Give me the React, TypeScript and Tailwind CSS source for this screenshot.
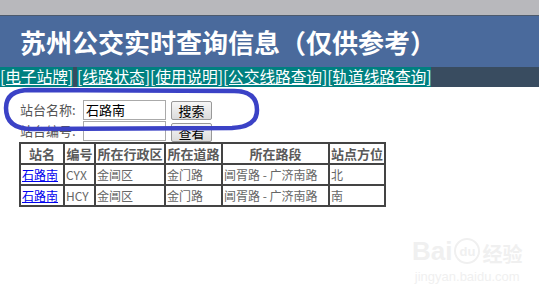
export default function App() {
  const nav = ["[电子站牌]", " ", "[线路状态]", "[使用说明]", "[公交线路查询]", "[轨道线路查询]"];
  const rows = [
    ["石路南", "CYX", "金阊区", "金门路", "阊胥路 - 广济南路", "北"],
    ["石路南", "HCY", "金阊区", "金门路", "阊胥路 - 广济南路", "南"],
  ];
  const widths = ["w-[44px]", "w-[31px]", "w-[70px]", "w-[57px]", "w-[107px]", "w-[56px]"];
  const heads = ["站名", "编号", "所在行政区", "所在道路", "所在路段", "站点方位"];
  return (
    <div className="relative w-[539px] h-[298px] bg-white overflow-hidden font-['Noto_Sans_CJK_SC','Noto_Sans',sans-serif]">
      <div className="h-[15px] bg-[#b8b8bc]" />
      <div className="h-[1px] bg-[#4d5a6c]" />
      <div className="h-[51px] bg-[#4a6a9c] flex items-center pl-[20px] text-[26px] font-bold text-white leading-none">
        苏州公交实时查询信息（仅供参考）
      </div>
      <div className="h-[20px] bg-[#394c60] flex items-stretch text-[15.8px] leading-[20px] whitespace-pre tracking-[-0.15px]">
        {nav.map((n, i) =>
          n === " " ? (
            <span key={i} className="w-[4px]" />
          ) : (
            <span key={i} className="bg-[#008080] text-white underline">
              {n}
            </span>
          )
        )}
      </div>
      <div className="flex flex-col pl-[20px] pt-[13px] gap-[1px] text-[13px]">
        <div className="flex items-center h-[20px]">
          <span className="w-[63px] text-[#555]">站台名称:</span>
          <div className="w-[83px] h-[20px] border border-[#aaa] px-[2px] leading-[18px] text-black">石路南</div>
          <div className="ml-[5px] w-[41px] h-[19px] border border-[#999] rounded-[2px] bg-gradient-to-b from-[#f6f6f6] to-[#dcdcdc] text-black flex items-center justify-center leading-none">
            搜索
          </div>
        </div>
        <div className="flex items-center h-[20px]">
          <span className="w-[63px] text-[#555]">站台编号:</span>
          <div className="w-[83px] h-[20px] border border-[#aaa]" />
          <div className="ml-[5px] mt-[2px] w-[41px] h-[19px] border border-[#999] rounded-[2px] bg-gradient-to-b from-[#f6f6f6] to-[#dcdcdc] text-black flex items-center justify-center leading-none">
            查看
          </div>
        </div>
      </div>
      <table className="ml-[19px] mt-[1px] table-fixed border-separate border-spacing-0 border border-[#444] w-[367px]">
        <thead>
          <tr>
            {heads.map((h, i) => (
              <th key={i} className={`${widths[i]} border border-[#444] p-0 text-[13px] leading-[19px] font-bold text-[#5a5a5a] text-center whitespace-nowrap`}>
                {h}
              </th>
            ))}
          </tr>
        </thead>
        <tbody>
          {rows.map((r, ri) => (
            <tr key={ri}>
              {r.map((c, ci) => (
                <td key={ci} className="border border-[#444] p-0 pl-[1px] text-[12px] leading-[19px] text-[#666] whitespace-nowrap overflow-hidden">
                  {ci === 0 ? <span className="text-[#0000ee] underline">{c}</span> : c}
                </td>
              ))}
            </tr>
          ))}
        </tbody>
      </table>
      <svg className="absolute left-0 top-0 pointer-events-none" width="539" height="298">
        <path
          d="M 30 90 Q 6 90 6 108 Q 6 129 32 129 L 232 128 Q 257 127 257 110 Q 257 91 234 91 Z"
          fill="none"
          stroke="#3b42c6"
          strokeWidth="4.5"
        />
      </svg>
      <div className="absolute left-[412px] top-[238px] flex flex-col items-center text-[#f0f0f0] pointer-events-none">
        <div className="flex items-end gap-[2px] leading-none">
          <span className="text-[26px] font-bold font-['Liberation_Sans',sans-serif]">Bai</span>
          <span className="w-[26px] h-[26px] rounded-full border-2 border-[#f0f0f0] text-[13px] font-bold flex items-center justify-center font-['Liberation_Sans',sans-serif]">du</span>
          <span className="text-[20px] font-bold">经验</span>
        </div>
        <span className="text-[13px] leading-none mt-[6px] font-['Liberation_Sans',sans-serif]">jingyan.baidu.com</span>
      </div>
    </div>
  );
}
